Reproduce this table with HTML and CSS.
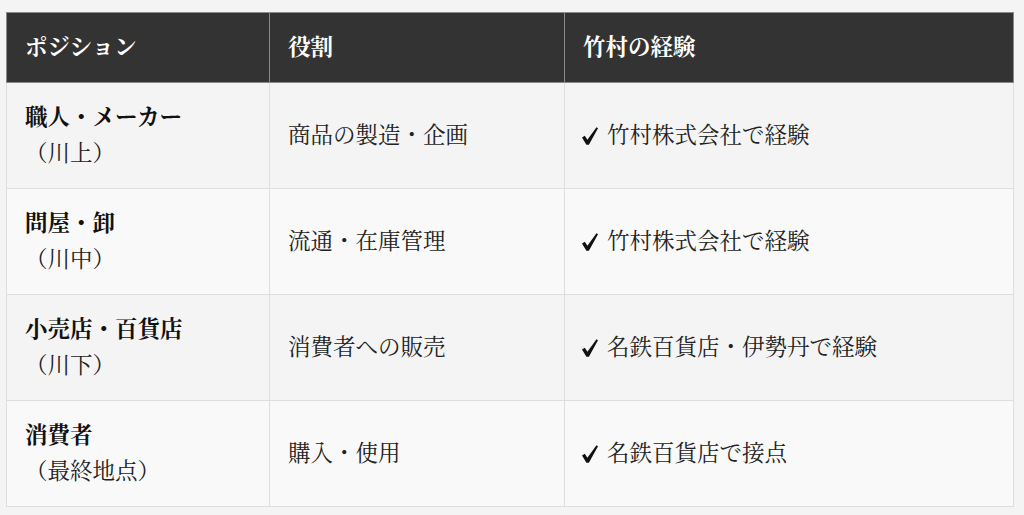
FILE: index.html
```html
<!DOCTYPE html>
<html lang="ja">
<head>
<meta charset="utf-8">
<link rel="stylesheet" href="styles.css">
</head>
<body>
<div class="page">
  <table class="flow">
    <colgroup>
      <col class="c1"><col class="c2"><col class="c3">
    </colgroup>
    <thead>
      <tr><th>ポジション</th><th>役割</th><th>竹村の経験</th></tr>
    </thead>
    <tbody>
      <tr>
        <td><strong>職人・メーカー</strong><br>（川上）</td>
        <td>商品の製造・企画</td>
        <td><svg class="chk" viewBox="0 0 16 18" width="16" height="18"><path d="M0 10.6 L2.8 8.8 L5.4 12.7 L14.5 0.2 L16 1.3 L6.9 17.7 L4.4 17.7 Z"/></svg>竹村株式会社で経験</td>
      </tr>
      <tr>
        <td><strong>問屋・卸</strong><br>（川中）</td>
        <td>流通・在庫管理</td>
        <td><svg class="chk" viewBox="0 0 16 18" width="16" height="18"><path d="M0 10.6 L2.8 8.8 L5.4 12.7 L14.5 0.2 L16 1.3 L6.9 17.7 L4.4 17.7 Z"/></svg>竹村株式会社で経験</td>
      </tr>
      <tr>
        <td><strong>小売店・百貨店</strong><br>（川下）</td>
        <td>消費者への販売</td>
        <td><svg class="chk" viewBox="0 0 16 18" width="16" height="18"><path d="M0 10.6 L2.8 8.8 L5.4 12.7 L14.5 0.2 L16 1.3 L6.9 17.7 L4.4 17.7 Z"/></svg>名鉄百貨店・伊勢丹で経験</td>
      </tr>
      <tr>
        <td><strong>消費者</strong><br>（最終地点）</td>
        <td>購入・使用</td>
        <td><svg class="chk" viewBox="0 0 16 18" width="16" height="18"><path d="M0 10.6 L2.8 8.8 L5.4 12.7 L14.5 0.2 L16 1.3 L6.9 17.7 L4.4 17.7 Z"/></svg>名鉄百貨店で接点</td>
      </tr>
    </tbody>
  </table>
</div>
</body>
</html>
```

FILE: styles.css
```css
html, body {
  margin: 0;
  padding: 0;
  background: #f4f4f4;
}
.page {
  padding: 12px 0 0 6px;
}
.flow {
  width: 1007px;
  border-collapse: collapse;
  table-layout: fixed;
  font-family: "Noto Serif CJK JP", "IPAMincho", "Liberation Serif", "Noto Sans CJK JP", serif;
  font-size: 22.5px;
  line-height: 36px;
  color: #222;
}
.c1 { width: 263px; }
.c2 { width: 295px; }
.c3 { width: 449px; }
.flow th {
  background: #333;
  color: #fff;
  font-weight: bold;
  text-align: left;
  padding: 14px 18px 19px;
  border: 1px solid #8a8a8a;
}
.flow td {
  padding: 14px 18px 19px;
  border: 1px solid #dedede;
  vertical-align: middle;
}
.flow tbody tr:nth-child(odd) td { background: #f4f4f4; }
.flow tbody tr:nth-child(even) td { background: #f9f9f9; }
.flow strong { font-weight: bold; color: #111; }
.chk {
  fill: #111;
  vertical-align: -2px;
  margin-left: -1px;
  margin-right: 9px;
}
```
